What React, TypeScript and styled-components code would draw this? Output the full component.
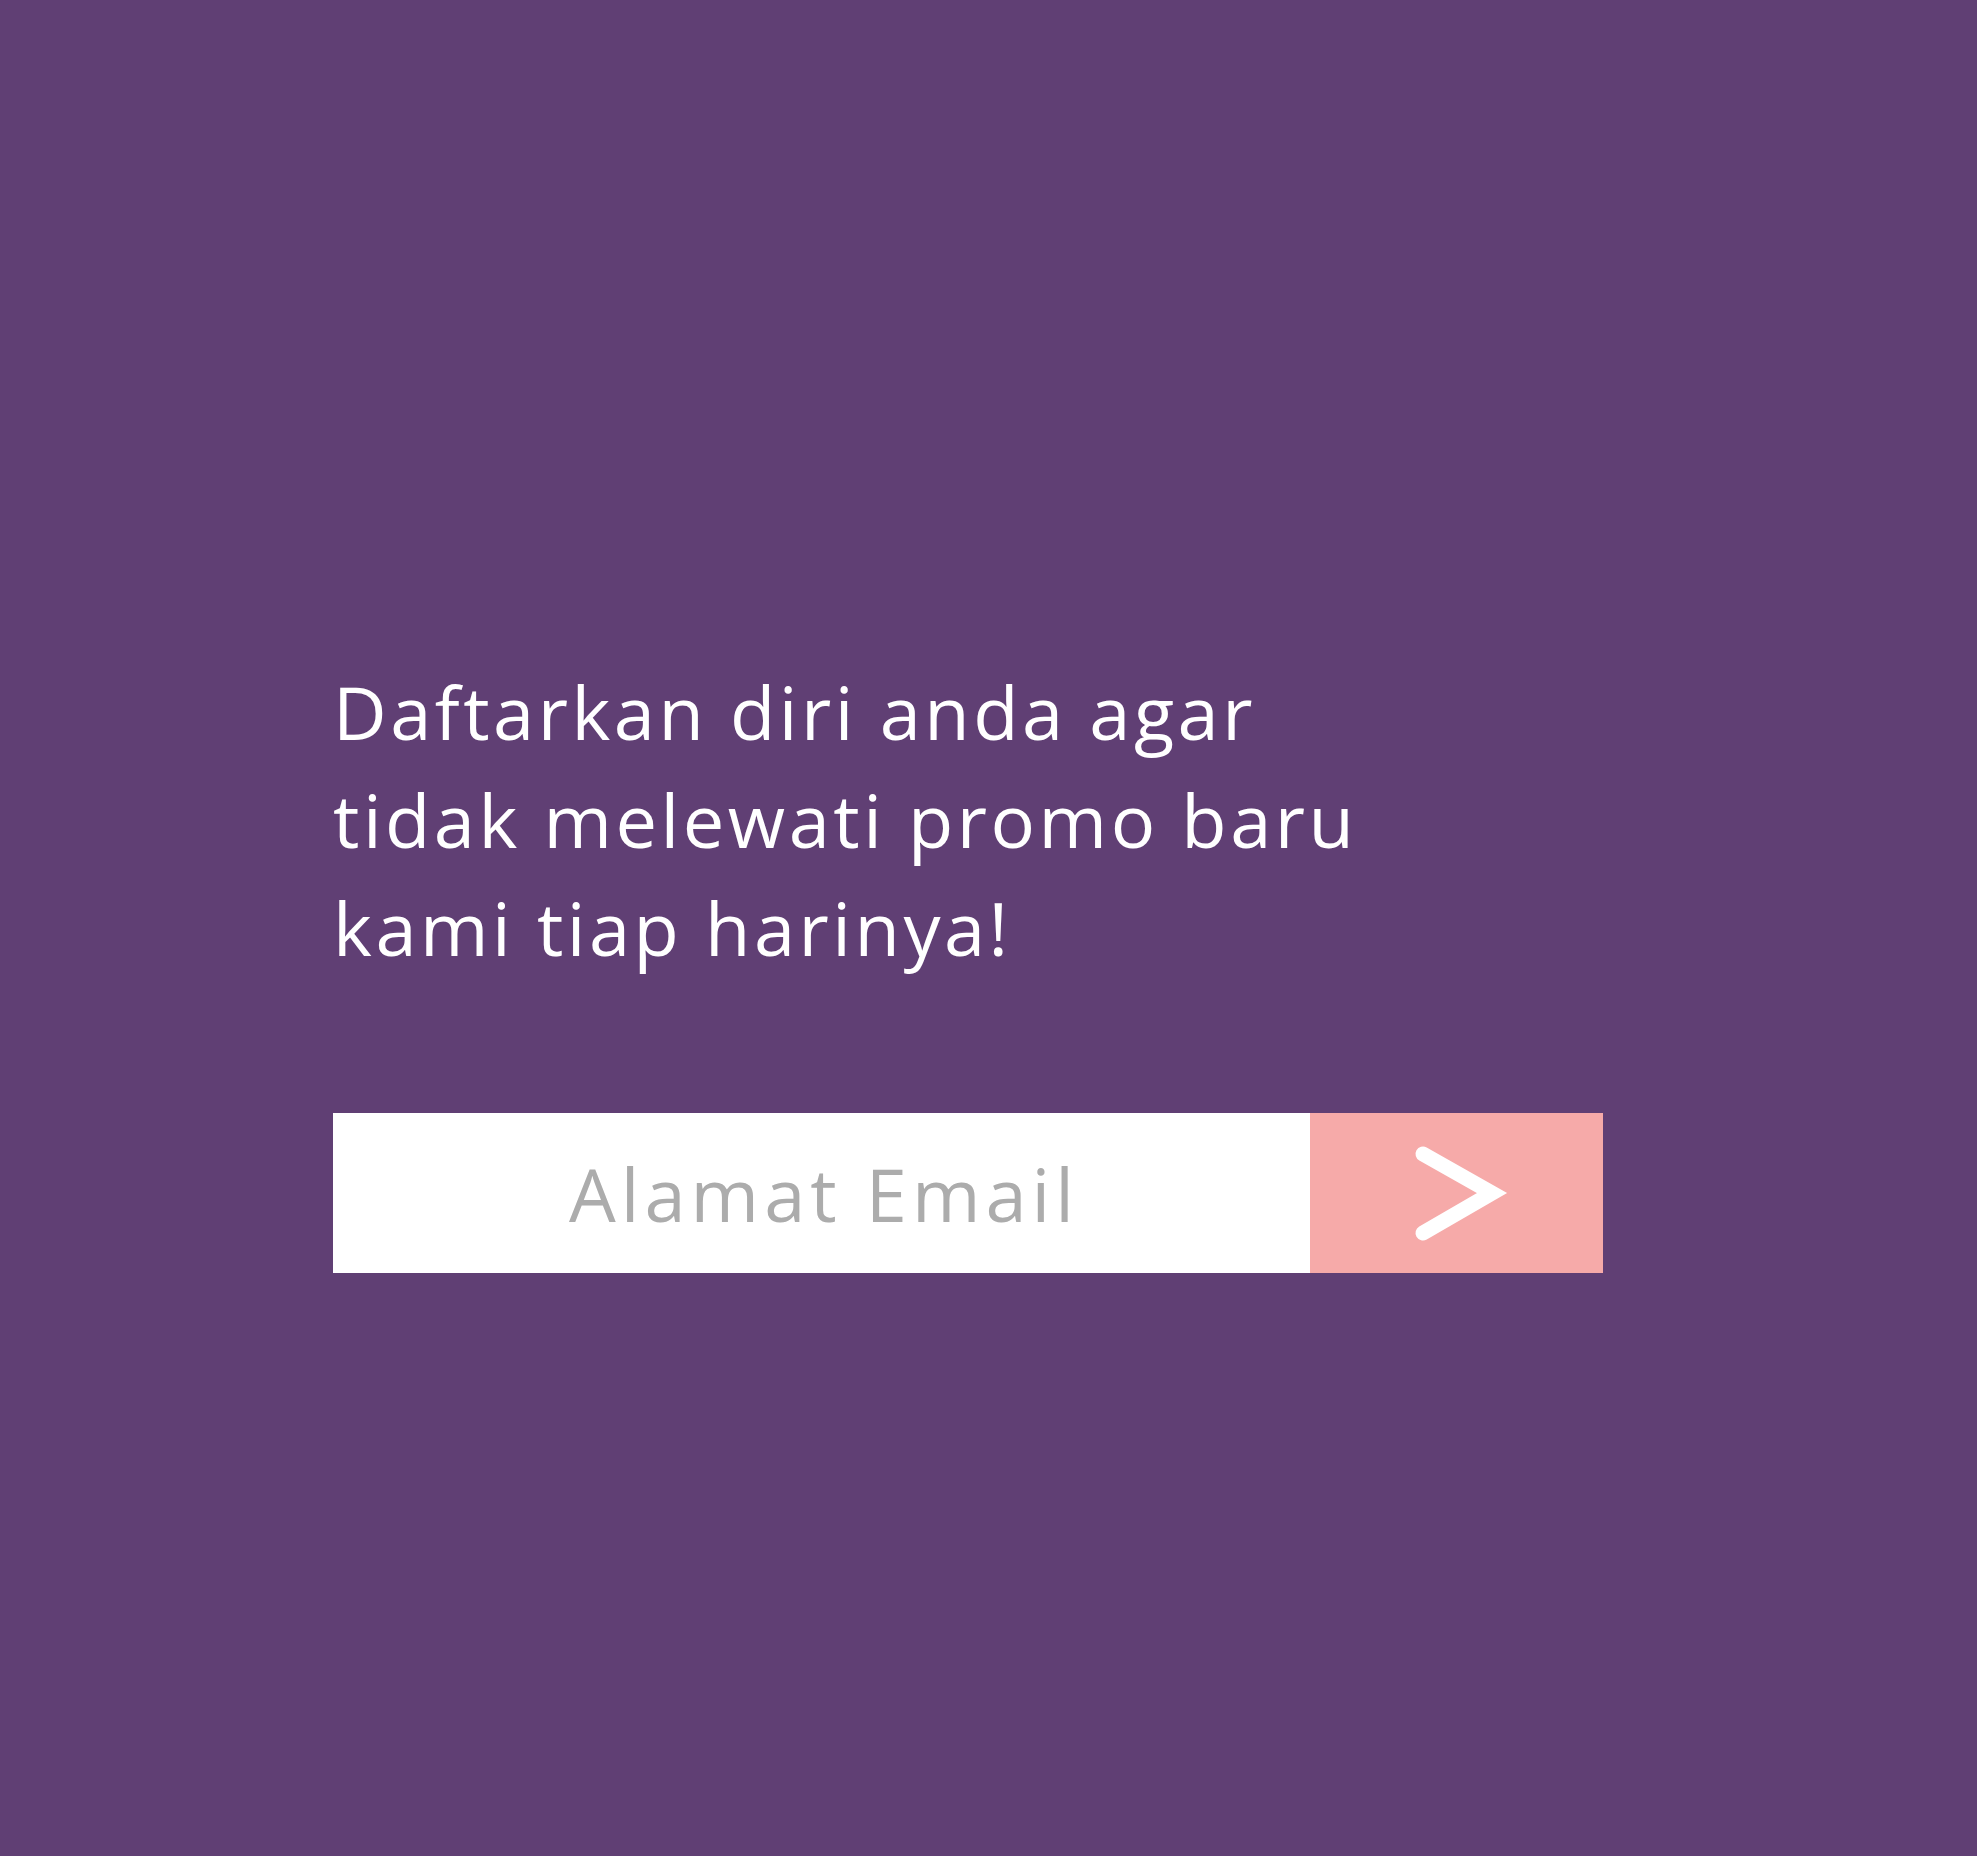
import React from "react";
import styled, { createGlobalStyle } from "styled-components";

const Global = createGlobalStyle`
  html, body { margin: 0; padding: 0; background: #603f74; }
  body { font-family: "Open Sans", "Noto Sans", sans-serif; }
`;

const Page = styled.main`
  width: 1977px;
  height: 1856px;
  box-sizing: border-box;
  background: #603f74;
  display: flex;
  flex-direction: column;
  padding: 658px 0 0 333px;
`;

const Heading = styled.h1`
  margin: 0;
  color: #ffffff;
  font-family: "Open Sans", "Noto Sans", sans-serif;
  font-weight: 400;
  font-size: 74px;
  line-height: 108px;
  letter-spacing: 3.5px;
`;

const Form = styled.form`
  display: flex;
  margin-top: 131px;
  width: 1270px;
  height: 160px;
`;

const EmailInput = styled.input`
  flex: 0 0 977px;
  height: 100%;
  box-sizing: border-box;
  border: none;
  outline: none;
  background: #ffffff;
  text-align: center;
  font-family: "Open Sans", "Noto Sans", sans-serif;
  font-weight: 400;
  font-size: 74px;
  letter-spacing: 5px;
  color: #555;
  padding: 0 0 0 5px;
  &::placeholder { color: #acacac; }
`;

const Submit = styled.button`
  flex: 1;
  height: 100%;
  border: none;
  background: #f6aaa9;
  display: flex;
  align-items: center;
  justify-content: center;
  padding: 0;
  cursor: pointer;
`;

const Chevron = () => (
  <svg width="293" height="160" viewBox="0 0 293 160">
    <path
      d="M113 41 L182 80 L113 120"
      fill="none"
      stroke="#ffffff"
      strokeWidth="15"
      strokeLinecap="round"
      strokeLinejoin="miter"
    />
  </svg>
);

export default function App() {
  return (
    <>
      <Global />
      <Page>
        <Heading>
          Daftarkan diri anda agar
          <br />
          tidak melewati promo baru
          <br />
          kami tiap harinya!
        </Heading>
        <Form onSubmit={(e) => e.preventDefault()}>
          <EmailInput type="email" placeholder="Alamat Email" />
          <Submit type="submit" aria-label="Kirim">
            <Chevron />
          </Submit>
        </Form>
      </Page>
    </>
  );
}
